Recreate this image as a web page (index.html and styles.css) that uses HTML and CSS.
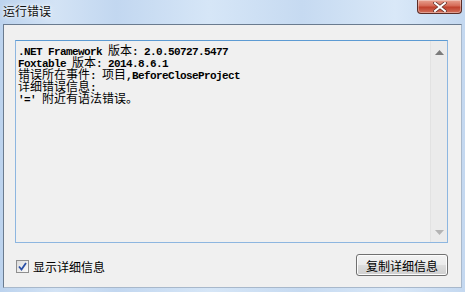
FILE: index.html
```html
<!DOCTYPE html>
<html>
<head>
<meta charset="utf-8">
<link rel="stylesheet" href="styles.css">
</head>
<body>
<div class="window">
  <div class="titlebar">
    <span class="title">运行错误</span>
    <div class="close">
      <svg width="14" height="10" viewBox="0 0 14 10"><path d="M2 1 L12 9 M12 1 L2 9" stroke="#5a2a24" stroke-width="3.4" stroke-linecap="square"/><path d="M2 1 L12 9 M12 1 L2 9" stroke="#ffffff" stroke-width="2" stroke-linecap="square"/></svg>
    </div>
  </div>
  <div class="client">
    <div class="textbox">
      <div class="text">
        <div class="line">.NET Framework <span class="cj">版本</span>: 2.0.50727.5477</div>
        <div class="line">Foxtable <span class="cj">版本</span>: 2014.8.6.1</div>
        <div class="line"><span class="cj">错误所在事件</span>: <span class="cj">项目</span>,BeforeCloseProject</div>
        <div class="line"><span class="cj">详细错误信息</span>:</div>
        <div class="line">'=' <span class="cj">附近有语法错误。</span></div>
      </div>
      <div class="scrollbar">
        <svg class="arrow" width="9" height="5" viewBox="0 0 9 5"><path d="M0 5 L4.5 0 L9 5 Z" fill="#7b7b7b"/></svg>
        <svg class="arrow" width="9" height="5" viewBox="0 0 9 5"><path d="M0 0 L4.5 5 L9 0 Z" fill="#b4b4b4"/></svg>
      </div>
    </div>
    <div class="bottom">
      <label class="check">
        <span class="box"><svg width="9" height="9" viewBox="0 0 9 9"><path d="M1 4.5 L3.5 7.5 L8 1" stroke="#2a4fa6" stroke-width="1.8" fill="none"/></svg></span>
        <span>显示详细信息</span>
      </label>
      <div class="button">复制详细信息</div>
    </div>
  </div>
</div>
</body>
</html>
```
FILE: styles.css
```css
html, body {
  margin: 0;
  padding: 0;
}
body {
  width: 465px;
  height: 292px;
  overflow: hidden;
  font-family: "Noto Sans CJK SC", "Microsoft YaHei", sans-serif;
  font-size: 12px;
  color: #000;
}
.window {
  width: 465px;
  height: 292px;
  display: flex;
  flex-direction: column;
  background: linear-gradient(90deg, #bcd3ee 0%, #d3e3f5 12%, #c2d7f0 25%, #d6e6f7 45%, #c6daf1 65%, #d9e8f8 85%, #c4d8f0 100%);
}
.titlebar {
  height: 24px;
  position: relative;
  display: flex;
  align-items: flex-start;
}
.title {
  margin: 3px 0 0 3px;
  line-height: 16px;
  font-size: 12px;
  color: #111;
  text-shadow: 0 0 6px #ffffff, 0 0 3px #ffffff;
}
.close {
  position: absolute;
  top: 0;
  right: 3px;
  width: 45px;
  height: 14px;
  border: 1px solid #5b2d27;
  border-top: none;
  border-radius: 0 0 4px 4px;
  box-sizing: border-box;
  background: linear-gradient(180deg, #e8a290 0%, #d56a56 45%, #c0412c 55%, #d2705c 100%);
  display: flex;
  align-items: center;
  justify-content: center;
  box-shadow: inset 0 0 0 1px rgba(255,255,255,0.35);
}
.client {
  flex: 1;
  margin: 0 3px 4px 3px;
  border: 1px solid #6a7b8f;
  border-right-color: #a8b8cb;
  border-bottom-color: #a8b8cb;
  background: #f0f0f0;
  padding: 15px 13px 0 11px;
  display: flex;
  flex-direction: column;
}
.textbox {
  height: 203px;
  box-sizing: border-box;
  border: 1px solid #8db6e0;
  border-top-color: #5d9bd3;
  background: #f0f0f0;
  display: flex;
}
.text {
  flex: 1;
  padding: 3px 0 0 2px;
  font-family: "Liberation Mono", monospace;
  font-size: 11px;
  font-weight: bold;
  letter-spacing: -0.6px;
  line-height: 12px;
}
.cj {
  font-family: "Noto Sans CJK SC", sans-serif;
  font-size: 12px;
  font-weight: normal;
  letter-spacing: 0;
}
.line {
  height: 12px;
  white-space: pre;
}
.scrollbar {
  width: 16px;
  background: #ebebeb;
  border-left: 1px solid #e2e2e2;
  display: flex;
  flex-direction: column;
  justify-content: space-between;
  align-items: center;
  padding: 9px 0 7px;
}
.bottom {
  flex: 1;
  display: flex;
  align-items: center;
  justify-content: space-between;
  padding-left: 1px;
}
.check {
  display: flex;
  align-items: center;
  gap: 4px;
  margin-top: 2px;
}
.box {
  width: 13px;
  height: 13px;
  box-sizing: border-box;
  border: 1px solid #8f8f8f;
  background: linear-gradient(135deg, #dcdcdc, #fafafa);
  display: flex;
  align-items: center;
  justify-content: center;
}
.button {
  width: 92px;
  height: 22px;
  box-sizing: border-box;
  border: 1px solid #707070;
  border-radius: 3px;
  background: linear-gradient(180deg, #f2f2f2 0%, #ebebeb 48%, #dddddd 52%, #cfcfcf 100%);
  box-shadow: inset 0 0 0 1px #fcfcfc;
  display: flex;
  align-items: center;
  justify-content: center;
  font-size: 12px;
  margin-top: 0;
}
```
